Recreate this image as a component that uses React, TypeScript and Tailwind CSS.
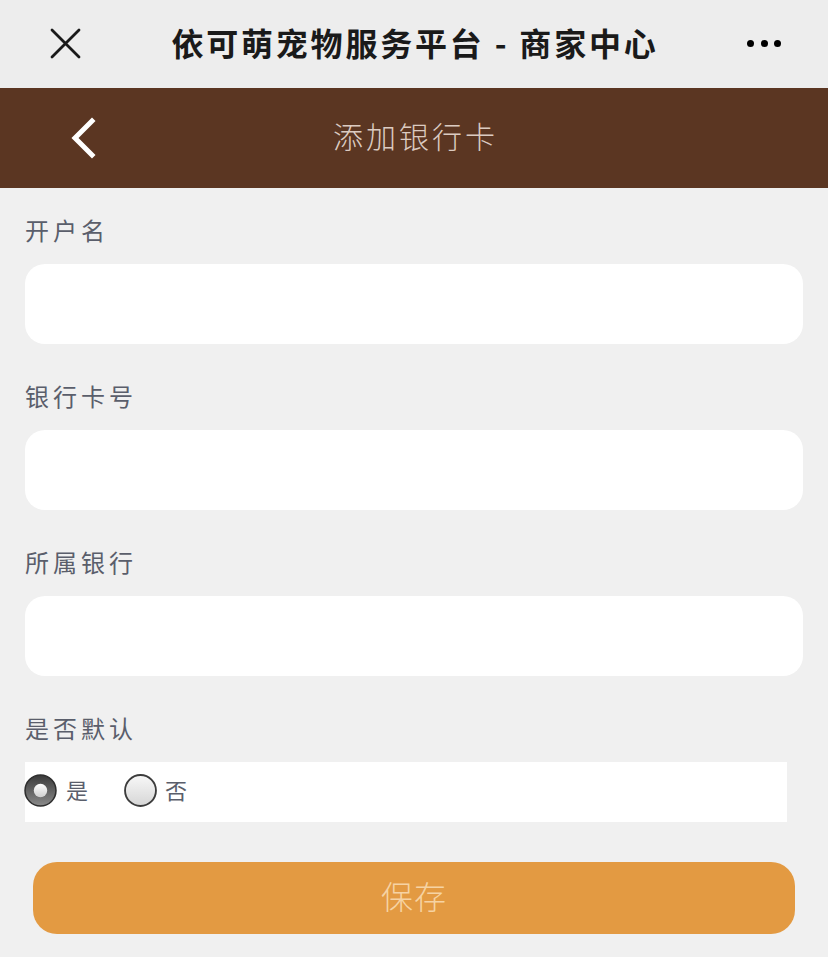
import React from "react";

const font = { fontFamily: '"Noto Sans CJK SC", "Noto Sans", sans-serif' };

function Radio({ checked }: { checked: boolean }) {
  return checked ? (
    <svg width="33" height="33" viewBox="0 0 32 32">
      <defs>
        <linearGradient id="rc" x1="0" y1="0" x2="0" y2="1">
          <stop offset="0" stopColor="#3a3a3a" />
          <stop offset="1" stopColor="#8a8a8a" />
        </linearGradient>
        <linearGradient id="rd" x1="0" y1="0" x2="0" y2="1">
          <stop offset="0" stopColor="#ffffff" />
          <stop offset="1" stopColor="#cfcfcf" />
        </linearGradient>
      </defs>
      <circle cx="16" cy="16" r="15" fill="url(#rc)" stroke="#2e2e2e" strokeWidth="1.5" />
      <circle cx="16" cy="16" r="6.5" fill="url(#rd)" />
    </svg>
  ) : (
    <svg width="33" height="33" viewBox="0 0 32 32">
      <defs>
        <linearGradient id="ru" x1="0" y1="0" x2="0" y2="1">
          <stop offset="0" stopColor="#f8f8f8" />
          <stop offset="1" stopColor="#d6d6d6" />
        </linearGradient>
      </defs>
      <circle cx="16" cy="16" r="15" fill="url(#ru)" stroke="#3c3c3c" strokeWidth="1.8" />
    </svg>
  );
}

function Field({ label, first }: { label: string; first?: boolean }) {
  return (
    <div>
      <div
        className={`${first ? "pt-[24px]" : "pt-[34px]"} pb-[16px] text-[24px] leading-[36px] tracking-[4px] text-[#5a5e6b]`}
      >
        {label}
      </div>
      <div className="h-[80px] rounded-[20px] bg-white" />
    </div>
  );
}

export default function App() {
  return (
    <div className="w-[828px] h-[957px] bg-[#f0f0f0] overflow-hidden" style={font}>
      {/* top bar */}
      <div className="h-[88px] bg-[#ededed] flex items-center relative">
        <svg className="absolute left-[50px] top-[28px]" width="31" height="31" viewBox="0 0 31 31">
          <path d="M2 2 L29 29 M29 2 L2 29" stroke="#1a1a1a" strokeWidth="2.8" strokeLinecap="round" />
        </svg>
        <div className="flex-1 text-center text-[32px] font-bold tracking-[2.8px] text-[#1a1a1a] leading-none pb-[4px] pl-[2px]">
          依可萌宠物服务平台 - 商家中心
        </div>
        <div className="absolute left-[747px] top-[40px] flex gap-[6.5px]">
          <span className="block w-[7px] h-[7px] rounded-full bg-black" />
          <span className="block w-[7px] h-[7px] rounded-full bg-black" />
          <span className="block w-[7px] h-[7px] rounded-full bg-black" />
        </div>
      </div>
      {/* brown header */}
      <div className="h-[100px] bg-[#5b3622] flex items-center justify-center relative">
        <svg className="absolute left-[68px] top-[28px]" width="32" height="44" viewBox="0 0 32 44">
          <path d="M24 5 L7 22 L24 39" stroke="#ffffff" strokeWidth="5" fill="none" strokeLinecap="square" />
        </svg>
        <div className="text-[30px] font-light tracking-[3px] text-[#dccbc1] leading-none pb-[6px] pl-[3px]">添加银行卡</div>
      </div>
      {/* form */}
      <div className="px-[25px]">
        <Field label="开户名" first />
        <Field label="银行卡号" />
        <Field label="所属银行" />
        <div className="pt-[34px] pb-[16px] text-[24px] leading-[36px] tracking-[4px] text-[#5a5e6b]">是否默认</div>
        <div className="h-[60px] w-[762px] bg-white flex items-center">
          <div className="flex items-center">
            <div className="-ml-[1px] -mt-[4px]">
              <Radio checked />
            </div>
            <span className="ml-[9px] -mt-[6px] text-[22px] text-[#5a5e6b]">是</span>
          </div>
          <div className="flex items-center ml-[36px]">
            <div className="-mt-[4px]">
              <Radio checked={false} />
            </div>
            <span className="ml-[8px] -mt-[6px] text-[22px] text-[#5a5e6b]">否</span>
          </div>
        </div>
      </div>
      <div className="px-[33px] pt-[40px]">
        <div className="h-[72px] w-[762px] rounded-[24px] bg-[#e39a42] flex items-center justify-center">
          <span className="text-[32px] font-light tracking-[1px] text-[#f6d3a3] leading-none pb-[6px]">保存</span>
        </div>
      </div>
    </div>
  );
}
